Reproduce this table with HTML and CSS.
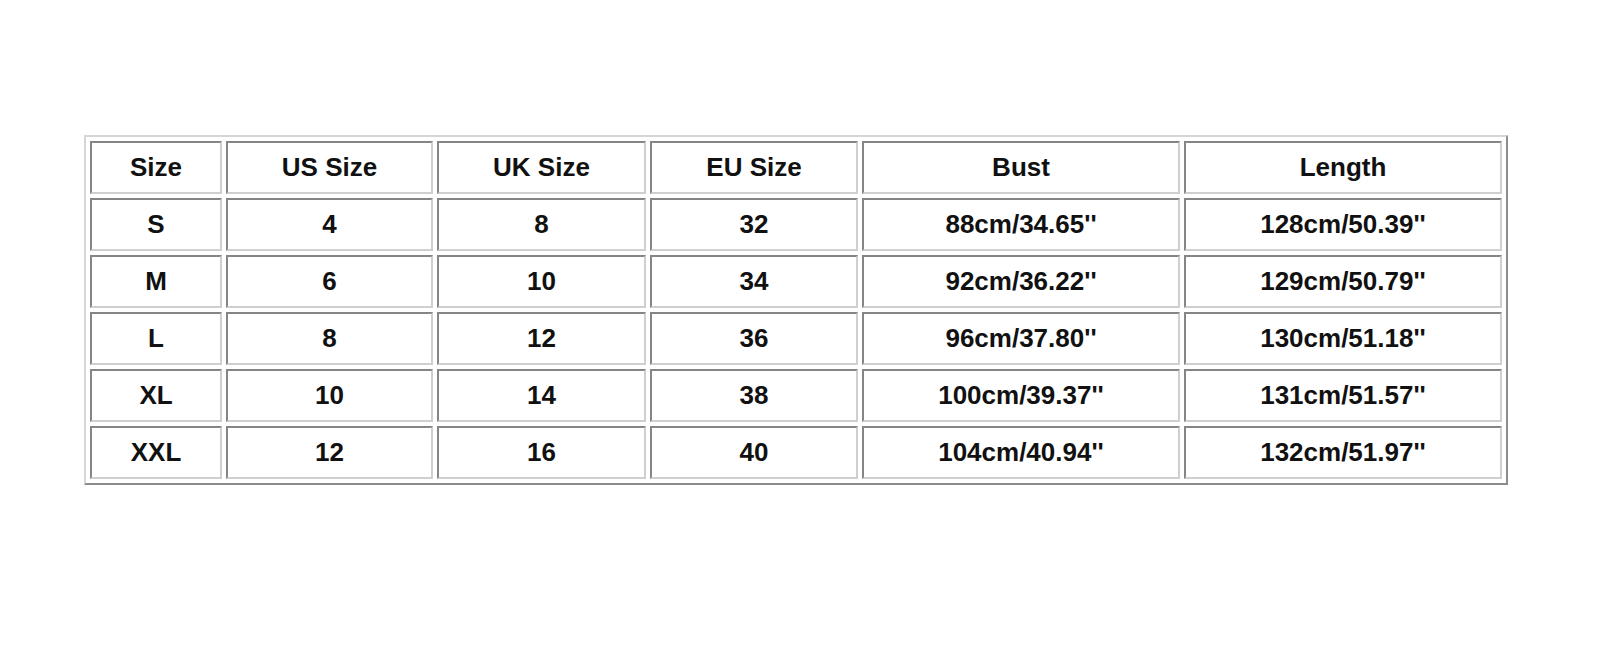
FILE: index.html
```html
<!DOCTYPE html>
<html>
<head>
<meta charset="utf-8">
<link rel="stylesheet" href="styles.css">
</head>
<body>
<table class="chart">
  <colgroup>
    <col class="c1"><col class="c2"><col class="c3"><col class="c4"><col class="c5"><col class="c6">
  </colgroup>
  <tr><td>Size</td><td>US Size</td><td>UK Size</td><td>EU Size</td><td>Bust</td><td>Length</td></tr>
  <tr><td>S</td><td>4</td><td>8</td><td>32</td><td>88cm/34.65''</td><td>128cm/50.39''</td></tr>
  <tr><td>M</td><td>6</td><td>10</td><td>34</td><td>92cm/36.22''</td><td>129cm/50.79''</td></tr>
  <tr><td>L</td><td>8</td><td>12</td><td>36</td><td>96cm/37.80''</td><td>130cm/51.18''</td></tr>
  <tr><td>XL</td><td>10</td><td>14</td><td>38</td><td>100cm/39.37''</td><td>131cm/51.57''</td></tr>
  <tr><td>XXL</td><td>12</td><td>16</td><td>40</td><td>104cm/40.94''</td><td>132cm/51.97''</td></tr>
</table>
</body>
</html>
```
FILE: styles.css
```css
html, body {
  margin: 0;
  padding: 0;
  background: #ffffff;
}
body {
  padding: 135px 0 0 84px;
}
.chart {
  table-layout: fixed;
  border-collapse: separate;
  border-spacing: 4px 4px;
  border-style: solid;
  border-width: 2px;
  border-color: #d6d6d6 #8c8c8c #8c8c8c #d6d6d6;
  font-family: "Liberation Sans", Arial, sans-serif;
  font-weight: bold;
  font-size: 26px;
  color: #111111;
}
.chart td {
  box-sizing: border-box;
  height: 53px;
  padding: 0;
  text-align: center;
  vertical-align: middle;
  border-style: solid;
  border-width: 2px;
  border-color: #858585 #cfcfcf #cfcfcf #858585;
  white-space: nowrap;
}
.c1 { width: 132px; }
.c2 { width: 207px; }
.c3 { width: 209px; }
.c4 { width: 208px; }
.c5 { width: 318px; }
.c6 { width: 318px; }
```
